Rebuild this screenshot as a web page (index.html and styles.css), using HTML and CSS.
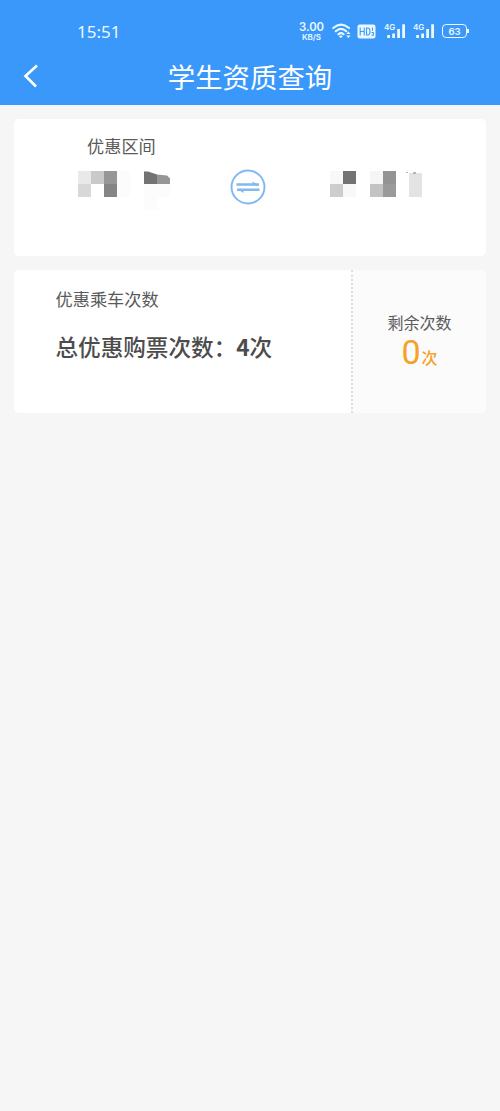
FILE: index.html
```html
<!DOCTYPE html>
<html lang="zh-CN">
<head>
<meta charset="utf-8">
<title>学生资质查询</title>
<link rel="stylesheet" href="styles.css">
</head>
<body>
<header class="header">
  <div class="status">
    <span class="clock">15:51</span>
    <div class="speed"><span class="rate">3.00</span><span class="unit">KB/S</span></div>
    <svg class="wifi" width="20" height="16" viewBox="0 0 20 16" fill="none" stroke="currentColor" stroke-width="2.100" stroke-linecap="round">
      <path d="M1.200 5Q9 -1.800 17 5M3.800 8.200Q9 3.600 14.300 8.200M6.400 11.200Q9 9 11.600 11.200"/>
      <path d="M7.600 13h2.800L9 14.600z" fill="currentColor" stroke-width=".8"/>
      <path d="M14.200 11l2.200-2.500 2.200 2.500zM14.200 12.500l2.200 2.500 2.200-2.500z" fill="currentColor" stroke="none"/>
    </svg>
    <svg class="hd" width="19" height="15" viewBox="0 0 19 15">
      <rect x=".5" y=".5" width="18" height="14" rx="2.200" fill="currentColor"/>
      <path d="M3.200 3.500v8M7.200 3.500v8M3.200 7.500h4M9.500 4v7h1.200Q13 11 13 7.500T10.700 4zM15.500 3.500v3.300M14.500 8.500h1.800v2.700h-1.800" fill="none" stroke="#3b98fb" stroke-width="1.100"/>
    </svg>
    <div class="signal"><span class="net">4G</span>
      <svg width="22" height="16" viewBox="0 0 22 16" fill="currentColor"><path d="M3.200 12h2.800v3H3.200zM8.200 10.500h2.800V15H8.200zM13.200 6H16v9h-2.800zM18.200 1.200H21V15h-2.800z"/></svg>
    </div>
    <div class="signal"><span class="net">4G</span>
      <svg width="22" height="16" viewBox="0 0 22 16" fill="currentColor"><path d="M3.200 12h2.800v3H3.200zM8.200 10.500h2.800V15H8.200zM13.200 6H16v9h-2.800zM18.200 1.200H21V15h-2.800z"/></svg>
    </div>
    <div class="battery"><span class="level">63</span></div>
  </div>
  <div class="titlebar">
    <svg class="back" width="16" height="24" viewBox="0 0 16 24" fill="none" stroke="currentColor" stroke-width="2.600"><path d="M14 1.500L2.500 12 13 22.500"/></svg>
    <h1 class="title">学生资质查询</h1>
  </div>
</header>
<main class="content">
  <section class="card route">
    <h2 class="label">优惠区间</h2>
    <div class="stations">
      <svg class="from" width="96" height="42" viewBox="0 0 96 42">
        <path fill="#e9e9e9" d="M0 1h13v13H0z"/><path fill="#c9c9c9" d="M13 1h13v13H13z"/><path fill="#979797" d="M26 1h13v13H26z"/>
        <path fill="#d8d8d8" d="M0 14h13v13H0z"/><path fill="#858585" d="M26 14h13v13H26z"/><path fill="#fcfcfc" d="M39 1h13v26H39zM66 14h26v13H66zM66 27h14v13H66z"/>
        <path fill="#737373" d="M66 1.500h4l9 3V14H66z"/><path fill="#969696" d="M79 4.500l10 1 3 3V14H79z"/>
      </svg>
      <svg class="swap" width="36" height="36" viewBox="0 0 36 36" fill="none" stroke="#83b8f0">
        <circle cx="18" cy="18" r="16.500" stroke-width="2"/>
        <path d="M6.500 15.500h22.500M7 20.800h22.500" stroke-width="2.600"/>
        <path d="M22.500 12.500l6.500 4h-6.500zM13.500 24l-6.500-4h6.500z" fill="#83b8f0" stroke="none"/>
      </svg>
      <svg class="to" width="94" height="28" viewBox="0 0 94 28" shape-rendering="crispEdges">
        <path fill="#f8f8f8" d="M0 1h13v13H0zM13 14h13v13H13z"/><path fill="#737373" d="M13 1h13v13H13z"/><path fill="#cdcdcd" d="M0 14h13v13H0z"/>
        <path fill="#f5f5f5" d="M40 1h13v13H40z"/><path fill="#939393" d="M53 1h13v13H53z"/><path fill="#c3c3c3" d="M40 14h13v13H40z"/><path fill="#9a9a9a" d="M53 14h13v13H53z"/>
        <path fill="#e3e3e3" d="M79 3h13v24H79z"/><path fill="#b5b5b5" d="M76 2h2v1h-2zM83 2h3v2h-3z"/>
      </svg>
    </div>
  </section>
  <section class="card count">
    <div class="total">
      <h2 class="label">优惠乘车次数</h2>
      <p class="sum">总优惠购票次数：<b>4</b>次</p>
    </div>
    <div class="remain">
      <span class="remain-label">剩余次数</span>
      <p class="remain-value"><span class="number">0</span>次</p>
    </div>
  </section>
</main>
</body>
</html>
```
FILE: styles.css
```css
* { box-sizing: border-box; }
body {
  margin: 0;
  min-height: 1111px;
  background: #f6f6f6;
  color: #5a5a5a;
  font-family: "Noto Sans CJK SC", sans-serif;
}
h1, h2, p { margin: 0; font-weight: 400; }
svg { display: block; flex: none; }

.header { height: 105px; background: #3b98fb; color: #eaf8ff; }
.status { display: flex; align-items: center; height: 50px; padding: 12px 31px 0 77px; }
.clock { width: 222px; padding-top: 1px; font: 17px/20px "Noto Sans", sans-serif; }
.speed { display: flex; flex-direction: column; width: 25px; align-items: center; font-family: Inter, sans-serif; font-weight: 600; }
.rate { font-size: 11.300px; line-height: 11px; }
.unit { font-size: 8px; line-height: 8px; }
.wifi { margin-left: 8px; }
.hd { margin-left: 5px; }
.signal { position: relative; width: 22px; margin-left: 7px; }
.hd + .signal { margin-left: 8px; }
.net { position: absolute; left: 0; top: 0; font: 600 8px/9px Inter, sans-serif; }
.battery {
  position: relative;
  display: flex;
  align-items: center;
  justify-content: center;
  width: 25px;
  height: 14px;
  margin-left: 7px;
  border: 1.500px solid currentColor;
  border-radius: 4px;
}
.battery::after {
  content: "";
  position: absolute;
  right: -3px;
  top: 4px;
  width: 2px;
  height: 4px;
  background: currentColor;
}
.level { font: 600 9.500px/11px Inter, sans-serif; }

.titlebar { display: grid; grid-template-columns: 40px 1fr 40px; align-items: center; height: 52px; }
.back { margin-left: 23px; color: #fff; }
.title { color: #fff; font-size: 27.400px; line-height: 40px; padding-bottom: 1px; text-align: center; }

.content { display: flex; flex-direction: column; gap: 14px; padding: 14px; }
.card { background: #fff; border-radius: 5px; overflow: hidden; }
.route { height: 137px; padding-top: 14px; }
.route .label { padding-left: 73px; }
.label { font-size: 17.200px; line-height: 26px; }
.stations { display: flex; align-items: flex-start; padding: 11px 0 0 64px; }
.swap { margin: -1px 0 0 56px; }
.to { margin-left: 64px; }

.count { display: flex; height: 143px; }
.total { width: 337px; padding: 16px 0 0 41.500px; }
.sum { margin-top: 19px; font-size: 22.600px; line-height: 32px; font-weight: 500; white-space: nowrap; color: #4c4c4c; }
.remain {
  flex: 1;
  display: flex;
  flex-direction: column;
  align-items: center;
  padding-top: 40px;
  border-left: 2px dotted #dedede;
  background: #fbfbfb;
}
.remain-label { font-size: 16px; line-height: 24px; }
.remain-value { display: flex; align-items: baseline; height: 34px; color: #f4a228; font-size: 16px; font-weight: 500; line-height: 34px; padding-top: 1px; }
.number { margin-right: 1px; font-family: Roboto, sans-serif; font-size: 34px; font-weight: 400; }
```
